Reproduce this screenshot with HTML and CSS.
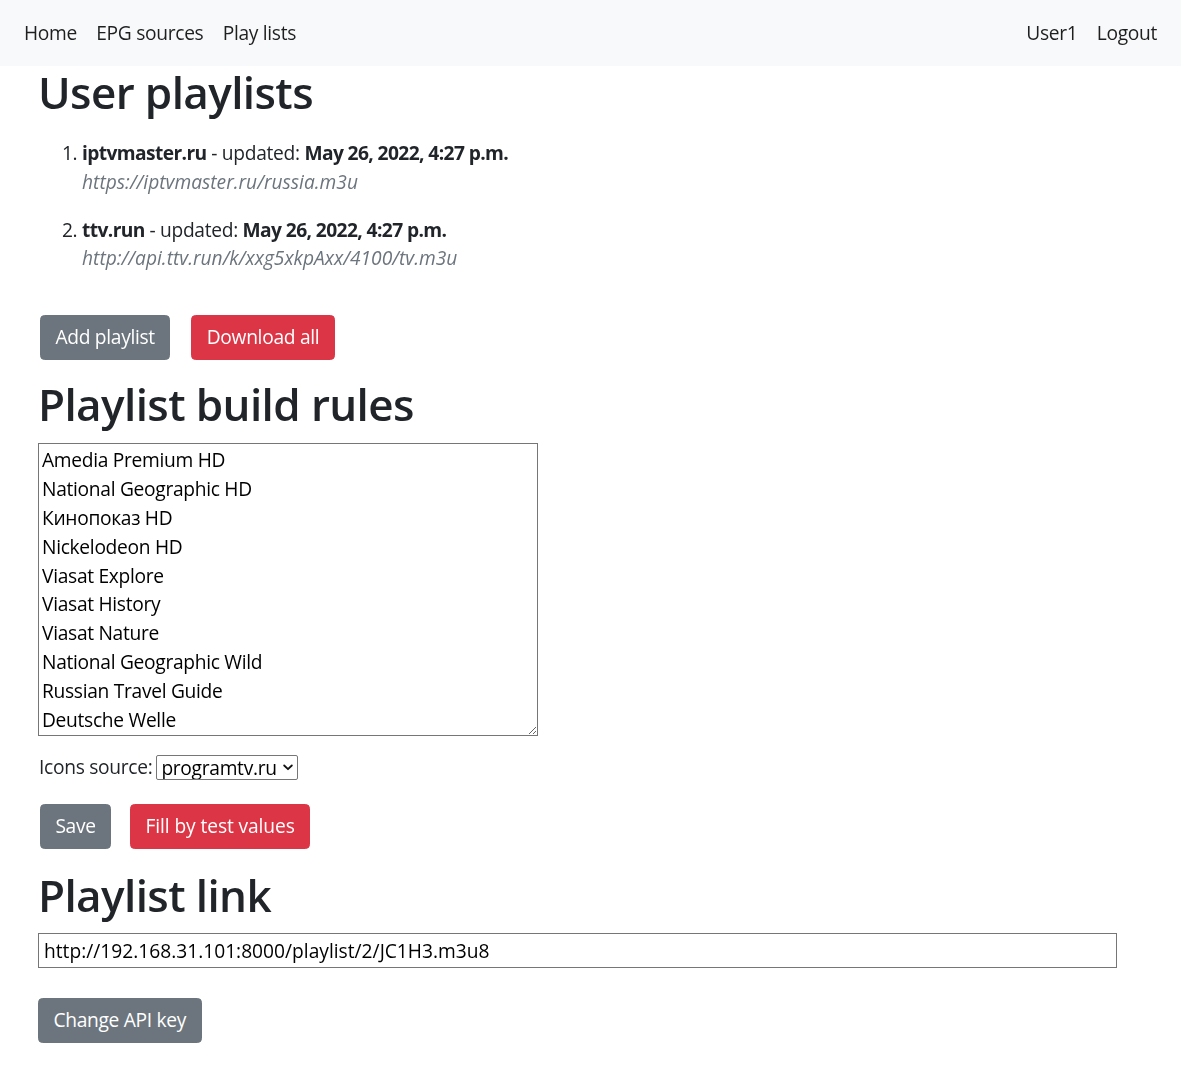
FILE: index.html
```html
<!DOCTYPE html>
<html lang="en">
<head>
<meta charset="utf-8">
<title>User playlists</title>
<link rel="stylesheet" href="styles.css">
</head>
<body>
<nav class="navbar">
  <ul class="nav-list">
    <li><a class="nav-link" href="#">Home</a></li>
    <li><a class="nav-link" href="#">EPG sources</a></li>
    <li><a class="nav-link" href="#">Play lists</a></li>
  </ul>
  <ul class="nav-list">
    <li><a class="nav-link" href="#">User1</a></li>
    <li><a class="nav-link" href="#">Logout</a></li>
  </ul>
</nav>
<main class="content">
  <h1 class="title">User playlists</h1>
  <ol class="playlists">
    <li class="playlist">
      <div><b>iptvmaster.ru</b> - updated: <b>May 26, 2022, 4:27 p.m.</b></div>
      <div class="pl-url">https://iptvmaster.ru/russia.m3u</div>
    </li>
    <li class="playlist">
      <div><b>ttv.run</b> - updated: <b>May 26, 2022, 4:27 p.m.</b></div>
      <div class="pl-url">http://api.ttv.run/k/xxg5xkpAxx/4100/tv.m3u</div>
    </li>
  </ol>
  <div class="btn-row btn-row-top">
    <button class="btn btn-secondary" type="button">Add playlist</button>
    <button class="btn btn-danger" type="button">Download all</button>
  </div>
  <h1 class="title title-rules">Playlist build rules</h1>
  <form class="rules-form">
    <textarea class="rules" rows="10">Amedia Premium HD
National Geographic HD
Кинопоказ HD
Nickelodeon HD
Viasat Explore
Viasat History
Viasat Nature
National Geographic Wild
Russian Travel Guide
Deutsche Welle</textarea>
    <div class="icons-row">
      <label class="icons-label" for="icons">Icons source:</label>
      <span class="select-wrap">
        <select class="icons-select" id="icons">
          <option>programtv.ru</option>
        </select>
        <svg class="select-arrow" width="10" height="7" viewBox="0 0 10 7" aria-hidden="true">
          <polyline points="1.2,1.5 5,5.2 8.8,1.5" fill="none" stroke="#111" stroke-width="1.8" stroke-linecap="round" stroke-linejoin="round"/>
        </svg>
      </span>
    </div>
    <div class="btn-row btn-row-save">
      <button class="btn btn-secondary" type="button">Save</button>
      <button class="btn btn-danger" type="button">Fill by test values</button>
    </div>
  </form>
  <h1 class="title title-link">Playlist link</h1>
  <input class="link-input" type="text" readonly value="http://192.168.31.101:8000/playlist/2/JC1H3.m3u8">
  <div class="api-row">
    <button class="btn btn-secondary" type="button">Change API key</button>
  </div>
</main>
</body>
</html>
```

FILE: styles.css
```css
* {
  box-sizing: border-box;
}

html, body {
  margin: 0;
  padding: 0;
  background: #fff;
}

body {
  font-family: "Open Sans", "Noto Sans", sans-serif;
  font-size: 19.2px;
  line-height: 1.5;
  letter-spacing: -0.3px;
  color: #212529;
}

.navbar {
  display: flex;
  justify-content: space-between;
  align-items: center;
  height: 66px;
  padding: 0 14.4px;
  background: #f8f9fa;
}

.nav-list {
  display: flex;
  margin: 0;
  padding: 0;
  list-style: none;
}

.nav-link {
  display: block;
  padding: 9.6px 9.6px;
  color: rgba(0, 0, 0, 0.88);
  text-decoration: none;
}

.content {
  padding-left: 38px;
}

.title {
  margin: 0 0 20px;
  font-size: 44px;
  font-weight: 600;
  line-height: 1.2;
  letter-spacing: -0.6px;
}

.title-rules {
  margin: 18.2px 0 12.5px;
}

.title-link {
  margin: 20.5px 0 11.2px;
}

.playlists {
  display: flow-root;
  margin: 0;
  padding-left: 44px;
}

.playlist {
  margin-bottom: 19.2px;
}

.playlist b {
  font-weight: 700;
  letter-spacing: -0.6px;
}

.pl-url {
  font-style: italic;
  letter-spacing: 0;
  color: #6c757d;
}

.btn-row {
  display: flex;
  gap: 21px;
  padding-left: 2px;
}

.btn-row-top {
  margin-top: 22.6px;
}

.btn-row-save {
  gap: 19px;
  margin-top: 21.7px;
}

.btn {
  display: inline-block;
  height: 45px;
  padding: 7.2px 14.4px;
  border: 1.2px solid transparent;
  border-radius: 4.5px;
  font-family: inherit;
  font-size: 19.2px;
  line-height: 1.5;
  letter-spacing: -0.3px;
  color: #fff;
  cursor: pointer;
}

.btn-secondary {
  background: #6c757d;
  border-color: #6c757d;
}

.btn-danger {
  background: #dc3545;
  border-color: #dc3545;
}

.btn-row-save .btn-danger {
  letter-spacing: -0.1px;
}

.rules-form {
  margin: 0;
}

.rules {
  display: block;
  width: 500px;
  height: 293px;
  margin: 0;
  padding: 2px 3px;
  border: 1px solid #767676;
  font-family: inherit;
  font-size: 19.2px;
  line-height: 28.8px;
  letter-spacing: -0.3px;
  color: #000;
  background: #fff;
}

.icons-row {
  display: flex;
  align-items: center;
  gap: 4px;
  height: 28.8px;
  margin-top: 17px;
}

.icons-label {
  padding-left: 1px;
}

.select-wrap {
  position: relative;
  display: inline-flex;
}

.icons-select {
  -webkit-appearance: none;
  appearance: none;
  height: 25px;
  margin: 0;
  padding: 0 20px 0 4px;
  border: 1px solid #767676;
  border-radius: 2px;
  font-family: inherit;
  font-size: 19.2px;
  line-height: 23px;
  letter-spacing: -0.3px;
  color: #000;
  background: #fff;
}

.select-arrow {
  position: absolute;
  top: 9px;
  right: 5px;
  pointer-events: none;
}

.link-input {
  display: block;
  width: 1079px;
  height: 35px;
  margin: 0;
  padding: 1px 5px;
  border: 1px solid #767676;
  font-family: inherit;
  font-size: 19.2px;
  letter-spacing: 0;
  color: #000;
  background: #fff;
}

.api-row {
  margin-top: 29.5px;
}
```
